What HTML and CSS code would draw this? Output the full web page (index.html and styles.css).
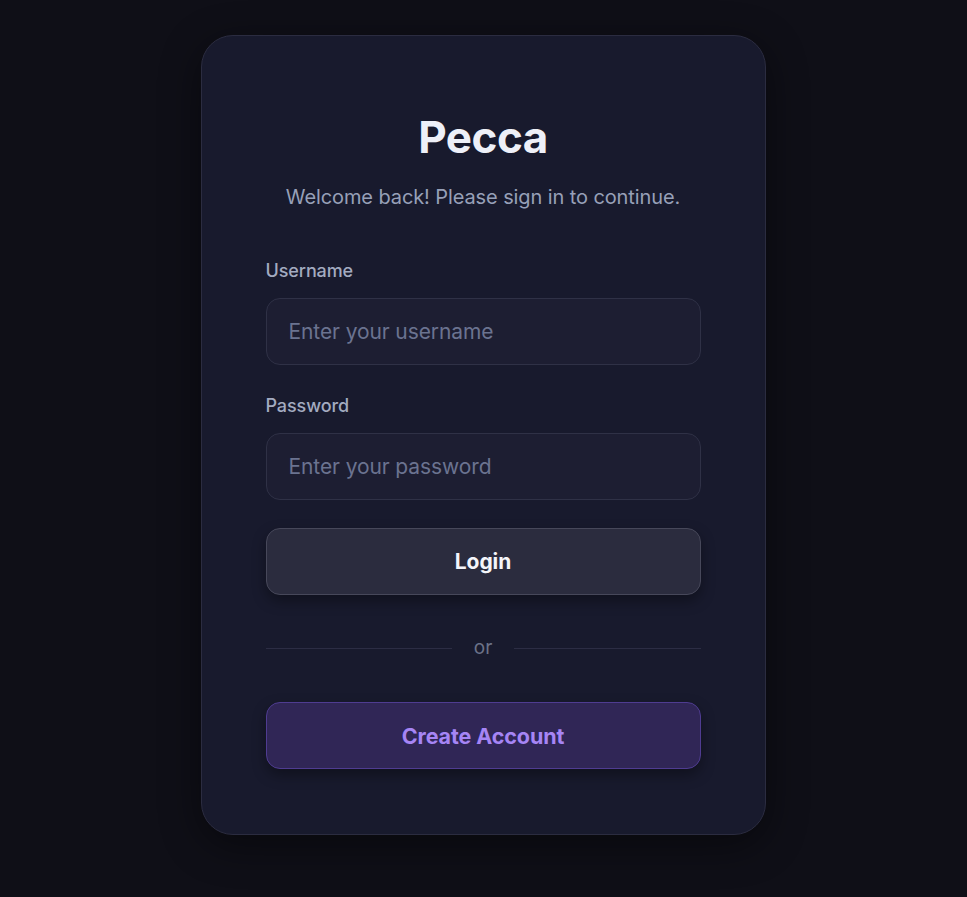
FILE: index.html
```html
<!DOCTYPE html>
<html lang="en">
<head>
<meta charset="utf-8">
<title>Pecca</title>
<link rel="stylesheet" href="styles.css">
</head>
<body>
<main class="page">
  <section class="card">
    <h1 class="title">Pecca</h1>
    <p class="subtitle">Welcome back! Please sign in to continue.</p>
    <form class="form">
      <div class="field">
        <label class="label" for="u">Username</label>
        <input class="input" id="u" type="text" placeholder="Enter your username">
      </div>
      <div class="field">
        <label class="label" for="p">Password</label>
        <input class="input" id="p" type="password" placeholder="Enter your password">
      </div>
      <button class="btn btn-login" type="button">Login</button>
      <div class="divider"><span class="line"></span><span class="or">or</span><span class="line"></span></div>
      <button class="btn btn-create" type="button">Create Account</button>
    </form>
  </section>
</main>
</body>
</html>
```

FILE: styles.css
```css
* { box-sizing: border-box; }
html, body { margin: 0; padding: 0; }
body {
  background: #0f0f17;
  font-family: "Inter", "Noto Sans", sans-serif;
  min-height: 897px;
}
.page {
  display: flex;
  justify-content: center;
  padding-top: 35px;
  padding-right: 1px;
}
.card {
  width: 565px;
  background: #181a2d;
  border: 1px solid #2b2c40;
  border-radius: 32px;
  padding: 64px 64px 65px;
  box-shadow: 0 10px 40px rgba(0,0,0,0.45);
}
.title {
  margin: 10px 0 0;
  text-align: center;
  color: #eef0f8;
  font-size: 44px;
  font-weight: 700;
  letter-spacing: -0.5px;
  line-height: 54px;
}
.subtitle {
  margin: 21px 0 0;
  text-align: center;
  color: #97a0b8;
  font-size: 20px;
  line-height: 24px;
  letter-spacing: -0.1px;
}
.form {
  display: flex;
  flex-direction: column;
  margin-top: 52px;
}
.field {
  display: flex;
  flex-direction: column;
  margin-bottom: 31px;
}
.field + .field { margin-bottom: 28px; }
.label {
  color: #a3abc0;
  font-size: 18px;
  font-weight: 500;
  line-height: 20px;
  margin-bottom: 17px;
  letter-spacing: -0.1px;
}
.input {
  height: 67px;
  background: #1d1e32;
  border: 1px solid #2f3146;
  border-radius: 14px;
  padding: 0 22px;
  font-family: inherit;
  font-size: 21px;
  color: #e5e7ef;
  outline: none;
  letter-spacing: -0.1px;
}
.input::placeholder { color: #6b7390; }
.btn {
  height: 67px;
  border-radius: 14px;
  font-family: inherit;
  font-size: 21px;
  font-weight: 700;
  letter-spacing: -0.1px;
  cursor: pointer;
}
.btn-login {
  background: #2b2c3e;
  border: 1px solid #47485a;
  color: #f4f5fa;
  box-shadow: 0 6px 14px rgba(0,0,0,0.35);
}
.divider {
  display: flex;
  align-items: center;
  gap: 22px;
  margin: 41px 0 42px;
  height: 24px;
}
.line {
  flex: 1;
  height: 1px;
  background: #2c2d44;
}
.or {
  color: #6b7288;
  font-size: 19px;
  line-height: 24px;
}
.btn-create {
  background: #302656;
  border: 1px solid #4f3c91;
  color: #a685f5;
  font-size: 21.5px;
  box-shadow: 0 6px 14px rgba(0,0,0,0.35);
}
```
